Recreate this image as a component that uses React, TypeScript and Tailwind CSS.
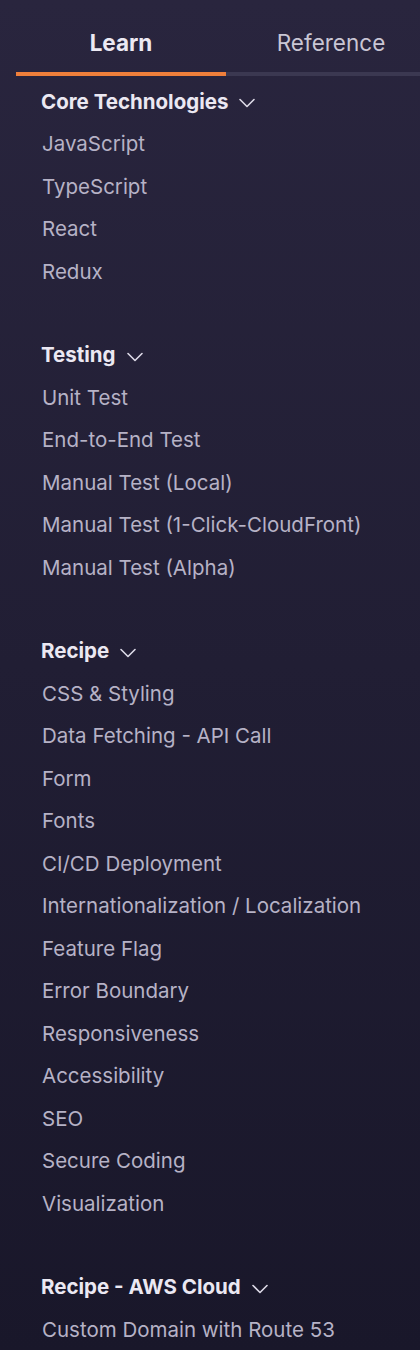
import { ChevronDown } from "lucide-react";

const SECTIONS: { title: string; items: string[] }[] = [
  {
    title: "Core Technologies",
    items: ["JavaScript", "TypeScript", "React", "Redux"],
  },
  {
    title: "Testing",
    items: [
      "Unit Test",
      "End-to-End Test",
      "Manual Test (Local)",
      "Manual Test (1-Click-CloudFront)",
      "Manual Test (Alpha)",
    ],
  },
  {
    title: "Recipe",
    items: [
      "CSS & Styling",
      "Data Fetching - API Call",
      "Form",
      "Fonts",
      "CI/CD Deployment",
      "Internationalization / Localization",
      "Feature Flag",
      "Error Boundary",
      "Responsiveness",
      "Accessibility",
      "SEO",
      "Secure Coding",
      "Visualization",
    ],
  },
  {
    title: "Recipe - AWS Cloud",
    items: ["Custom Domain with Route 53"],
  },
];

export default function App() {
  return (
    <div
      className="h-[1350px] w-[420px] overflow-hidden bg-gradient-to-b from-[#29253e] to-[#19172a]"
      style={{ fontFamily: "Inter, 'Noto Sans', sans-serif" }}
    >
      {/* tabs */}
      <div className="flex w-[436px] pl-4">
        <div className="flex h-[76px] w-[210px] shrink-0 flex-col">
          <div className="flex flex-1 items-center justify-center pt-[14px] text-[22.5px] font-bold text-[#ece9f3]">
            Learn
          </div>
          <div className="h-1 bg-[#ef7f3b]" />
        </div>
        <div className="flex h-[76px] w-[210px] shrink-0 flex-col">
          <div className="flex flex-1 items-center justify-center pt-[14px] text-[22.5px] text-[#c9c6d4]">
            Reference
          </div>
          <div className="h-1 bg-[#3b3851]" />
        </div>
      </div>

      {/* nav list */}
      <nav className="pt-[5px]">
        {SECTIONS.map((section) => (
          <div key={section.title} className="mb-[41px]">
            <div className="flex h-[42.5px] items-center gap-[5px] pl-[41px] text-[20.5px] font-bold text-[#ebe8f2]">
              <span>{section.title}</span>
              <ChevronDown size={28} strokeWidth={1.4} className="mt-[2px] text-[#dcd9e6]" />
            </div>
            {section.items.map((item) => (
              <div
                key={item}
                className="flex h-[42.5px] items-center pl-[42px] text-[20.5px] text-[#b6b2c6]"
              >
                {item}
              </div>
            ))}
          </div>
        ))}
      </nav>
    </div>
  );
}
